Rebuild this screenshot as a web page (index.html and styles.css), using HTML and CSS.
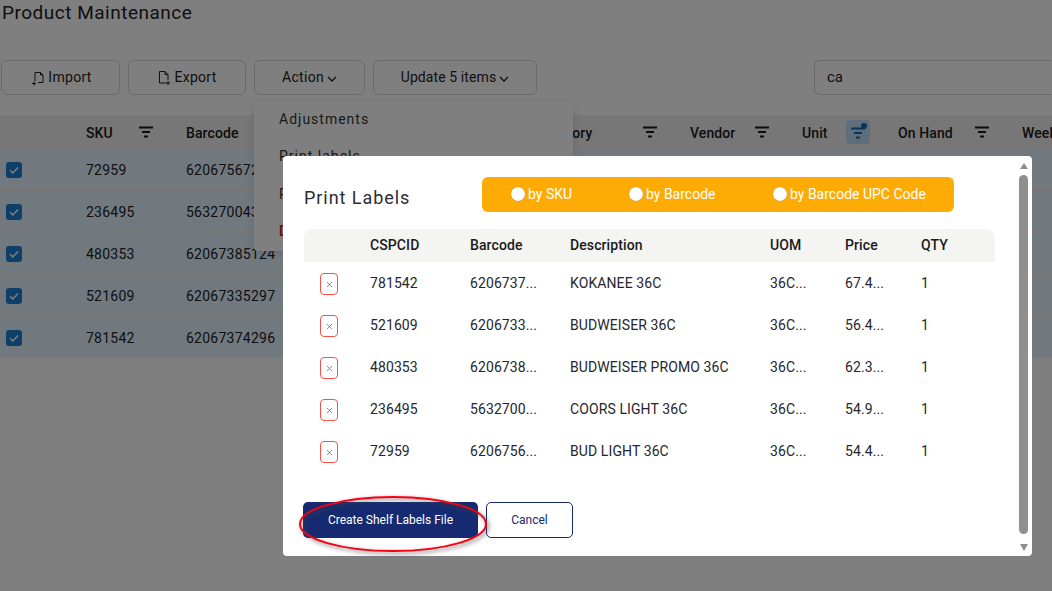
FILE: index.html
```html
<!DOCTYPE html>
<html lang="en">
<head>
<meta charset="utf-8">
<title>Product Maintenance</title>
<link rel="stylesheet" href="styles.css">
</head>
<body>
<svg class="defs" width="0" height="0" aria-hidden="true">
  <symbol id="filter" viewBox="0 0 16 12"><path d="M1 1.5h14M4 6h8M6 10.5h4" fill="none" stroke="currentColor" stroke-width="2"/></symbol>
  <symbol id="check" viewBox="0 0 16 16"><path d="M4 8.3l2.8 2.6L12 5.4" fill="none" stroke="#fff" stroke-width="1.5"/></symbol>
  <symbol id="chev" viewBox="0 0 10 6"><path d="M1 1l4 4 4-4" fill="none" stroke="currentColor" stroke-width="1.3"/></symbol>
  <symbol id="times" viewBox="0 0 8 8"><path d="M1.2 1.2l5.6 5.6M6.8 1.2l-5.6 5.6" fill="none" stroke="#f0443c" stroke-width="1"/></symbol>
</svg>
<main class="page">
  <h1 class="title">Product Maintenance</h1>
  <div class="toolbar">
    <button class="btn btn-import"><svg class="file-ic" viewBox="0 0 14 16"><path d="M4 11V2.5h5.5L12 5v7.5H7M9.5 2.5V5H12M3 11.5v4M1 13.5h4" fill="none" stroke="currentColor" stroke-width="1"/></svg>Import</button>
    <button class="btn btn-export"><svg class="file-ic" viewBox="0 0 14 16"><path d="M9 13H2.5V1.5H8L11 4.5V10M8 1.5v3h3M11 11v4M9 13h4" fill="none" stroke="currentColor" stroke-width="1"/></svg>Export</button>
    <button class="btn btn-action">Action<svg class="chev"><use href="#chev"/></svg></button>
    <button class="btn btn-update">Update 5 items<svg class="chev"><use href="#chev"/></svg></button>
    <div class="search">ca</div>
  </div>
  <div class="grid-table">
    <div class="thead">
      <div class="c c-check"></div>
      <div class="c c-sku">SKU<svg class="filter"><use href="#filter"/></svg></div>
      <div class="c c-bar">Barcode</div>
      <div class="c c-desc">Description</div>
      <div class="c c-cat">Category<svg class="filter"><use href="#filter"/></svg></div>
      <div class="c c-ven">Vendor<svg class="filter"><use href="#filter"/></svg></div>
      <div class="c c-unit">Unit<span class="filter-on"><svg class="filter"><use href="#filter"/></svg><i class="dot"></i></span></div>
      <div class="c c-hand">On Hand<svg class="filter"><use href="#filter"/></svg></div>
      <div class="c c-week">Weekly</div>
    </div>
    <div class="trow"><div class="c c-check"><svg class="cb"><use href="#check"/></svg></div><div class="c c-sku">72959</div><div class="c c-bar">62067567214</div></div>
    <div class="trow"><div class="c c-check"><svg class="cb"><use href="#check"/></svg></div><div class="c c-sku">236495</div><div class="c c-bar">56327004312</div></div>
    <div class="trow"><div class="c c-check"><svg class="cb"><use href="#check"/></svg></div><div class="c c-sku">480353</div><div class="c c-bar">62067385124</div></div>
    <div class="trow"><div class="c c-check"><svg class="cb"><use href="#check"/></svg></div><div class="c c-sku">521609</div><div class="c c-bar">62067335297</div></div>
    <div class="trow"><div class="c c-check"><svg class="cb"><use href="#check"/></svg></div><div class="c c-sku">781542</div><div class="c c-bar">62067374296</div></div>
  </div>
  <ul class="menu">
    <li>Adjustments</li>
    <li>Print labels</li>
    <li>Print tags</li>
    <li class="danger">Delete</li>
  </ul>
</main>
<div class="overlay"></div>
<section class="modal">
  <div class="modal-body">
    <div class="modal-head">
      <h2 class="modal-title">Print Labels</h2>
      <div class="radios">
        <label class="radio r1"><i class="circle"></i>by SKU</label>
        <label class="radio r2"><i class="circle"></i>by Barcode</label>
        <label class="radio r3"><i class="circle"></i>by Barcode UPC Code</label>
      </div>
    </div>
    <div class="lab-table">
      <div class="lab-row lab-head"><span></span><span>CSPCID</span><span>Barcode</span><span>Description</span><span>UOM</span><span>Price</span><span>QTY</span></div>
      <div class="lab-row"><span><b class="x"><svg class="x-ic"><use href="#times"/></svg></b></span><span>781542</span><span>6206737...</span><span>KOKANEE 36C</span><span>36C...</span><span>67.4...</span><span>1</span></div>
      <div class="lab-row"><span><b class="x"><svg class="x-ic"><use href="#times"/></svg></b></span><span>521609</span><span>6206733...</span><span>BUDWEISER 36C</span><span>36C...</span><span>56.4...</span><span>1</span></div>
      <div class="lab-row"><span><b class="x"><svg class="x-ic"><use href="#times"/></svg></b></span><span>480353</span><span>6206738...</span><span>BUDWEISER PROMO 36C</span><span>36C...</span><span>62.3...</span><span>1</span></div>
      <div class="lab-row"><span><b class="x"><svg class="x-ic"><use href="#times"/></svg></b></span><span>236495</span><span>5632700...</span><span>COORS LIGHT 36C</span><span>36C...</span><span>54.9...</span><span>1</span></div>
      <div class="lab-row"><span><b class="x"><svg class="x-ic"><use href="#times"/></svg></b></span><span>72959</span><span>6206756...</span><span>BUD LIGHT 36C</span><span>36C...</span><span>54.4...</span><span>1</span></div>
    </div>
    <div class="modal-actions">
      <button class="primary">Create Shelf Labels File</button>
      <button class="ghost">Cancel</button>
    </div>
  </div>
  <div class="scrollbar">
    <i class="arrow up"></i>
    <i class="thumb"></i>
    <i class="arrow down"></i>
  </div>
</section>
<svg class="annot" viewBox="0 0 200 64" aria-hidden="true">
  <ellipse class="annot-line" cx="96" cy="30" rx="93" ry="27"/>
</svg>
</body>
</html>
```
FILE: styles.css
```css
* { box-sizing: border-box; }
html, body { margin: 0; height: 100%; }
body {
  position: relative;
  width: 1052px;
  height: 591px;
  overflow: hidden;
  background: #fff;
  font-family: Roboto, "Liberation Sans", sans-serif;
  font-size: 14px;
  color: #1f2024;
}
.defs { position: absolute; }
.page { padding-top: 1px; }
.title { margin: 0 0 0 2px; height: 23px; font-size: 19px; line-height: 23px; font-weight: 400; letter-spacing: .5px; }
.toolbar { display: flex; gap: 8px; margin: 36px 0 0 1px; height: 35px; }
.btn {
  flex: none; display: flex; align-items: center; justify-content: center;
  height: 35px; padding: 0 0 2px; background: #fff;
  border: 1px solid #d4d4d4; border-radius: 6px;
  font: 400 14px Roboto, sans-serif; letter-spacing: .3px; color: #1f2024;
}
.btn-import { width: 119px; padding-left: 2px; }
.btn-export { width: 118px; }
.btn-action { width: 111px; }
.btn-update { width: 164px; letter-spacing: .1px; }
.file-ic { width: 14px; height: 16px; margin: 2px 3px 0 0; color: #1f2024; }
.chev { width: 10px; height: 6px; margin: 4px 0 0 3px; }
.search {
  margin-left: 269px; width: 237px; flex: none; padding: 0 12px 2px;
  display: flex; align-items: center;
  border: 1px solid #d4d4d4; border-right: 0; border-radius: 6px 0 0 6px; font-size: 15px;
}
.grid-table { margin-top: 20px; }
.thead, .trow { display: flex; align-items: center; }
.thead { height: 34px; padding-top: 2px; background: #eee; font-weight: 500; color: #1a1a1a; }
.trow { height: 42px; background: #e2f2ff; border-bottom: 1px solid #f2e9e2; }
.trow:last-child { height: 41px; border-bottom: 0; }
.c { flex: none; display: flex; align-items: center; height: 100%; white-space: nowrap; overflow: hidden; letter-spacing: .25px; }
.thead .c { letter-spacing: .1px; }
.c-check { width: 86px; padding-left: 6px; }
.c-sku { width: 100px; }
.c-bar { width: 114px; }
.c-desc { width: 235px; }
.c-cat { width: 155px; }
.c-ven { width: 112px; }
.c-unit { width: 96px; }
.c-hand { width: 124px; }
.c-week { width: 30px; }
.filter { width: 16px; height: 12px; margin-top: -2px; color: #1a1a1a; flex: none; }
.c-sku .filter { margin-left: 25px; }
.c-cat .filter { margin-left: 50px; }
.c-ven .filter { margin-left: 19px; }
.c-hand .filter { margin-left: 21px; }
.filter-on {
  position: relative; display: flex; align-items: center; justify-content: center;
  width: 24px; height: 24px; margin: -2px 0 0 18px; border-radius: 4px; background: #bddcf7;
}
.filter-on .filter { color: #1268b3; margin-top: 1px; }
.dot { position: absolute; top: 3px; right: 3px; width: 6px; height: 6px; border-radius: 50%; background: #1268b3; }
.cb { width: 16px; height: 16px; border-radius: 3px; background: #1d7ed2; }
.menu {
  position: absolute; left: 254px; top: 101px; width: 319px; height: 150px;
  margin: 0; padding: 0; list-style: none; background: #fff;
  border-radius: 4px; box-shadow: 0 2px 8px rgba(0,0,0,.12);
  color: #333; letter-spacing: 1px;
}
.menu li { height: 37.3px; line-height: 36px; padding-left: 25px; }
.menu .danger { color: #e02424; font-weight: 700; }
.overlay { position: absolute; inset: 0; background: rgba(0,0,0,.5); }
.modal {
  position: absolute; left: 283px; top: 156px; width: 749px; height: 400px;
  display: flex; background: #fff; border-radius: 4px;
}
.modal-body { flex: none; width: 733px; padding: 21px 0 0 20px; display: flex; flex-direction: column; }
.modal-head { display: flex; align-items: flex-start; height: 52px; }
.modal-title { margin: 10px 0 0 1px; width: 178px; flex: none; font-size: 18px; line-height: 22px; font-weight: 400; letter-spacing: .95px; color: #2c2c34; }
.radios {
  display: flex; align-items: center; width: 472px; height: 35px; flex: none; padding-bottom: 1px;
  background: #ffab05; border-radius: 6px; color: #fff;
}
.radio { display: flex; align-items: center; }
.r1 { margin-left: 29px; width: 118px; }
.r2 { width: 144px; }
.circle { width: 14px; height: 14px; margin-right: 3px; border-radius: 50%; background: #fff; box-shadow: 0 0 1px rgba(0,0,0,.4); }
.lab-table { width: 691px; margin-left: 1px; }
.lab-row { display: grid; grid-template-columns: 66px 100px 100px 200px 75px 76px 74px; align-items: center; height: 42px; letter-spacing: .1px; color: #26262c; }
.lab-head { height: 33px; padding-bottom: 2px; background: #f4f4f2; border-radius: 8px 8px 0 0; font-weight: 500; color: #1a1a1a; }
.x { display: flex; align-items: center; justify-content: center; width: 18px; height: 22px; margin: 2px 0 0 16px; border: 1px solid #f5524a; border-radius: 4px; }
.x-ic { width: 7px; height: 7px; }
.modal-actions { display: flex; gap: 8px; margin-top: 30px; }
.primary, .ghost { height: 36px; padding: 0; border-radius: 5px; font: 400 12px Roboto, sans-serif; }
.primary { width: 175px; background: #152a70; border: 0; color: #fff; }
.ghost { width: 87px; background: #fff; border: 1px solid #152a70; color: #152a70; }
.scrollbar { flex: none; width: 9px; margin: 7px 0 0 3px; display: flex; flex-direction: column; align-items: center; }
.arrow { width: 0; height: 0; border-left: 4.5px solid transparent; border-right: 4.5px solid transparent; }
.up { border-bottom: 6px solid #8f8f8f; }
.down { border-top: 7px solid #8f8f8f; margin-top: 10px; }
.thumb { width: 9px; height: 359px; margin-top: 6px; border-radius: 5px; background: #8f8f8f; }
.annot { position: absolute; left: 297px; top: 494px; width: 200px; height: 64px; overflow: visible; filter: drop-shadow(2px 2px 2px rgba(70,70,70,.8)); }
.annot-line { fill: none; stroke: #f80012; stroke-width: 2; }
```
